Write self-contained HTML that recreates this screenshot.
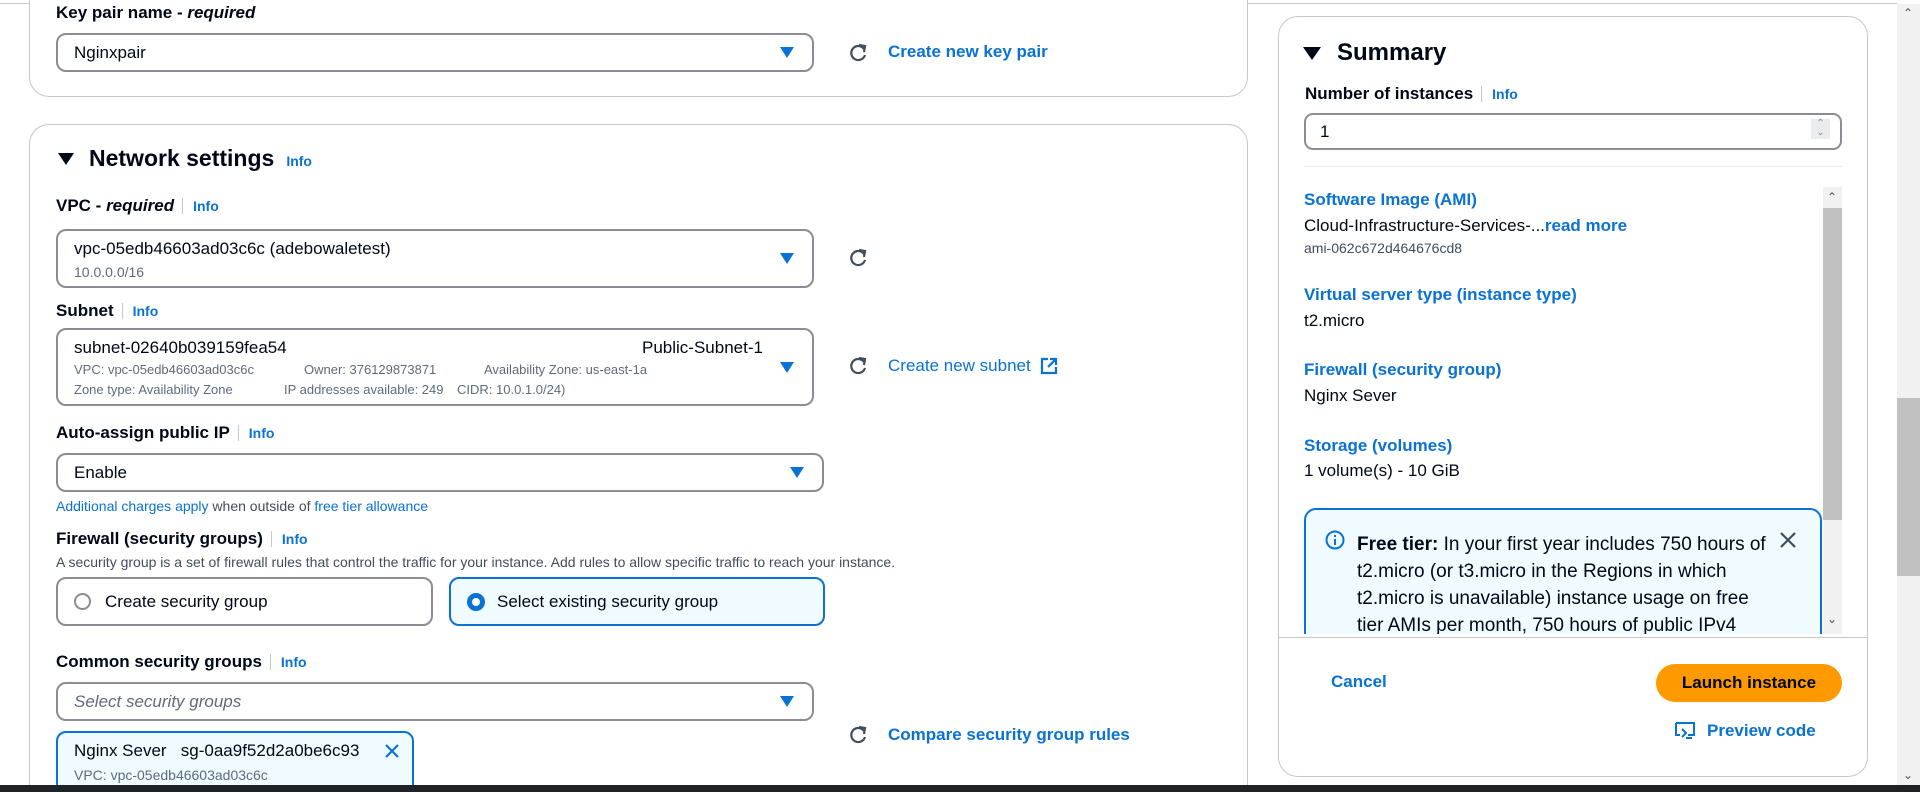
<!DOCTYPE html>
<html style="width:1920px;height:792px;overflow:hidden"><head><meta charset="utf-8"><style>
*{box-sizing:border-box;margin:0;padding:0}
body{width:1920px;height:792px;overflow:hidden;background:#fff;font-family:"Liberation Sans",Arial,sans-serif;color:#000716;position:relative;font-size:17px}
.a{position:absolute;white-space:nowrap}
.card{position:absolute;border:1px solid #c6c6cd;border-radius:20px;background:#fff}
.lbl{font-weight:bold;font-size:17px;line-height:20px}
.info{color:#0972d3;font-weight:bold;font-size:14px;padding-left:10px;margin-left:8px;border-left:1px solid #c6c6cd}
.sel{position:absolute;border:2px solid #8c8c94;border-radius:10px;background:#fff}
.arr{position:absolute;width:0;height:0;border-left:7px solid transparent;border-right:7px solid transparent;border-top:11px solid #0972d3}
.link{color:#0972d3;font-weight:bold}
.gray{color:#5f6b7a}
.bl{color:#0972d3;font-weight:bold}
</style></head><body>
<div class="a" style="left:0;top:3px;width:1897px;height:1px;background:#c6c6cd"></div>

<div class="card" style="left:29px;top:-40px;width:1219px;height:137px"></div>
<div class="a lbl" style="left:56px;top:3px">Key pair name - <i>required</i></div>
<div class="sel" style="left:56px;top:33px;width:758px;height:39px"><span class="a" style="left:16px;top:8px">Nginxpair</span><div class="arr" style="right:18px;top:12px"></div></div>
<svg class="a" style="left:847px;top:42px" width="22" height="22" viewBox="0 0 22 22"><path d="M17 7A7 7 0 1 0 18 13" fill="none" stroke="#414d5c" stroke-width="2.2"/><path d="M12 3l6 1-1 6" fill="none" stroke="#414d5c" stroke-width="2.2"/></svg>
<div class="a link" style="left:888px;top:42px">Create new key pair</div>

<div class="card" style="left:29px;top:124px;width:1219px;height:700px"></div>
<div class="a" style="left:58px;top:153px;width:0;height:0;border-left:8px solid transparent;border-right:8px solid transparent;border-top:12px solid #000716"></div>
<div class="a" style="left:89px;top:145px;font-size:23px;font-weight:bold">Network settings<span class="info" style="border:none;margin:0;padding-left:12px">Info</span></div>
<div class="a lbl" style="left:56px;top:196px">VPC - <i>required</i><span class="info">Info</span></div>
<div class="sel" style="left:56px;top:229px;width:758px;height:59px"><span class="a" style="left:16px;top:8px">vpc-05edb46603ad03c6c (adebowaletest)</span><span class="a gray" style="left:16px;top:33px;font-size:14px">10.0.0.0/16</span><div class="arr" style="right:18px;top:22px"></div></div>
<svg class="a" style="left:847px;top:247px" width="22" height="22" viewBox="0 0 22 22"><path d="M17 7A7 7 0 1 0 18 13" fill="none" stroke="#414d5c" stroke-width="2.2"/><path d="M12 3l6 1-1 6" fill="none" stroke="#414d5c" stroke-width="2.2"/></svg>
<div class="a lbl" style="left:56px;top:301px">Subnet<span class="info">Info</span></div>
<div class="sel" style="left:56px;top:328px;width:758px;height:78px">
<span class="a" style="left:16px;top:8px">subnet-02640b039159fea54</span><span class="a" style="left:584px;top:8px">Public-Subnet-1</span>
<span class="a gray" style="left:16px;top:32px;font-size:13px">VPC: vpc-05edb46603ad03c6c</span><span class="a gray" style="left:246px;top:32px;font-size:13px">Owner: 376129873871</span><span class="a gray" style="left:426px;top:32px;font-size:13px">Availability Zone: us-east-1a</span>
<span class="a gray" style="left:16px;top:52px;font-size:13px">Zone type: Availability Zone</span><span class="a gray" style="left:226px;top:52px;font-size:13px">IP addresses available: 249</span><span class="a gray" style="left:399px;top:52px;font-size:13px">CIDR: 10.0.1.0/24)</span>
<div class="arr" style="right:18px;top:32px"></div></div>
<svg class="a" style="left:847px;top:355px" width="22" height="22" viewBox="0 0 22 22"><path d="M17 7A7 7 0 1 0 18 13" fill="none" stroke="#414d5c" stroke-width="2.2"/><path d="M12 3l6 1-1 6" fill="none" stroke="#414d5c" stroke-width="2.2"/></svg>
<div class="a" style="left:888px;top:356px;color:#0972d3">Create new subnet</div>
<svg class="a" style="left:1040px;top:357px" width="18" height="18" viewBox="0 0 18 18"><path d="M8 2H2v14h14v-6M10 2h6v6M16 2L8 10" fill="none" stroke="#0972d3" stroke-width="2.2"/></svg>

<div class="a lbl" style="left:56px;top:423px">Auto-assign public IP<span class="info">Info</span></div>
<div class="sel" style="left:56px;top:453px;width:768px;height:39px"><span class="a" style="left:16px;top:8px">Enable</span><div class="arr" style="right:18px;top:12px"></div></div>
<div class="a" style="left:56px;top:498px;font-size:14px;color:#414d5c"><span style="color:#0972d3">Additional charges apply</span> when outside of <span style="color:#0972d3">free tier allowance</span></div>
<div class="a lbl" style="left:56px;top:529px">Firewall (security groups)<span class="info">Info</span></div>
<div class="a" style="left:56px;top:554px;font-size:14px;color:#414d5c">A security group is a set of firewall rules that control the traffic for your instance. Add rules to allow specific traffic to reach your instance.</div>
<div class="a" style="left:56px;top:577px;width:377px;height:49px;border:2px solid #8c8c94;border-radius:10px"><div class="a" style="left:16px;top:14px;width:17px;height:17px;border:2px solid #8c8c94;border-radius:50%"></div><span class="a" style="left:47px;top:13px">Create security group</span></div>
<div class="a" style="left:449px;top:577px;width:376px;height:49px;border:2px solid #0972d3;border-radius:10px;background:#f0fbff"><div class="a" style="left:16px;top:14px;width:18px;height:18px;border:5px solid #0972d3;border-radius:50%;background:#fff"></div><span class="a" style="left:46px;top:13px">Select existing security group</span></div>
<div class="a lbl" style="left:56px;top:652px">Common security groups<span class="info">Info</span></div>
<div class="sel" style="left:56px;top:682px;width:758px;height:39px"><span class="a" style="left:16px;top:8px;font-style:italic;color:#5f6b7a">Select security groups</span><div class="arr" style="right:18px;top:12px"></div></div>
<div class="a" style="left:56px;top:731px;width:358px;height:70px;border:2px solid #0972d3;border-radius:10px;background:#f0fbff">
<span class="a" style="left:16px;top:8px">Nginx Sever&nbsp;&nbsp; sg-0aa9f52d2a0be6c93</span>
<svg class="a" style="left:326px;top:10px" width="16" height="16" viewBox="0 0 16 16"><path d="M2 2L14 14M14 2L2 14" stroke="#0972d3" stroke-width="2.2"/></svg>
<span class="a gray" style="left:16px;top:34px;font-size:14px">VPC: vpc-05edb46603ad03c6c</span></div>
<svg class="a" style="left:847px;top:724px" width="22" height="22" viewBox="0 0 22 22"><path d="M17 7A7 7 0 1 0 18 13" fill="none" stroke="#414d5c" stroke-width="2.2"/><path d="M12 3l6 1-1 6" fill="none" stroke="#414d5c" stroke-width="2.2"/></svg>
<div class="a link" style="left:888px;top:725px">Compare security group rules</div>

<div class="card" style="left:1278px;top:16px;width:590px;height:761px"></div>
<div class="a" style="left:1303px;top:47px;width:0;height:0;border-left:9px solid transparent;border-right:9px solid transparent;border-top:13px solid #000716"></div>
<div class="a" style="left:1337px;top:39px;font-size:24px;font-weight:bold">Summary</div>
<div class="a lbl" style="left:1305px;top:84px">Number of instances<span class="info">Info</span></div>
<div class="a" style="left:1304px;top:113px;width:538px;height:37px;border:2px solid #8c8c94;border-radius:9px"><span class="a" style="left:14px;top:7px">1</span><div class="a" style="right:10px;top:4px;width:19px;height:20px;background:#e9ebed;color:#8c8c94;font-size:10px;line-height:9px;text-align:center">⌃<br>⌄</div></div>
<div class="a" style="left:1304px;top:166px;width:538px;height:1px;background:#e9ebed"></div>
<div class="a" style="left:1823px;top:187px;width:19px;height:447px;background:#f1f1f1"></div>
<div class="a" style="left:1823px;top:208px;width:19px;height:312px;background:#c1c1c1"></div>
<div class="a" style="left:1827px;top:190px;font-size:12px;color:#505050">⌃</div>
<div class="a" style="left:1827px;top:612px;font-size:12px;color:#505050">⌄</div>
<div class="a bl" style="left:1304px;top:190px">Software Image (AMI)</div>
<div class="a" style="left:1304px;top:216px">Cloud-Infrastructure-Services-...<span class="bl">read more</span></div>
<div class="a" style="left:1304px;top:240px;font-size:14px;color:#414d5c">ami-062c672d464676cd8</div>
<div class="a bl" style="left:1304px;top:285px">Virtual server type (instance type)</div>
<div class="a" style="left:1304px;top:311px">t2.micro</div>
<div class="a bl" style="left:1304px;top:360px">Firewall (security group)</div>
<div class="a" style="left:1304px;top:386px">Nginx Sever</div>
<div class="a bl" style="left:1304px;top:436px">Storage (volumes)</div>
<div class="a" style="left:1304px;top:461px">1 volume(s) - 10 GiB</div>
<div class="a" style="left:1302px;top:506px;width:522px;height:128px;overflow:hidden">
<div class="a" style="left:2px;top:2px;width:518px;height:170px;border:2px solid #0972d3;border-radius:12px;background:#f0fbff"></div>
<svg class="a" style="left:23px;top:24px" width="20" height="20" viewBox="0 0 20 20"><circle cx="10" cy="10" r="8.5" fill="none" stroke="#0972d3" stroke-width="2"/><path d="M10 9v6M10 5v2" stroke="#0972d3" stroke-width="2"/></svg>
<div class="a" style="left:55px;top:25px;line-height:27px;font-size:19px">
<b>Free tier:</b> In your first year includes 750 hours of<br>t2.micro (or t3.micro in the Regions in which<br>t2.micro is unavailable) instance usage on free<br>tier AMIs per month, 750 hours of public IPv4</div>
<svg class="a" style="left:477px;top:25px" width="18" height="18" viewBox="0 0 18 18"><path d="M2 2L16 16M16 2L2 16" stroke="#414d5c" stroke-width="2.2"/></svg>
</div>
<div class="a" style="left:1279px;top:637px;width:588px;height:1px;background:#c6c6cd"></div>
<div class="a link" style="left:1331px;top:672px">Cancel</div>
<div class="a" style="left:1656px;top:664px;width:186px;height:38px;background:#ff9900;border-radius:19px;font-weight:bold;text-align:center;line-height:38px">Launch instance</div>
<svg class="a" style="left:1674px;top:721px" width="22" height="20" viewBox="0 0 22 20"><path d="M2 2h18v12h-6M2 2v12h4" fill="none" stroke="#0972d3" stroke-width="2"/><path d="M8 8l4 4-4 4M12 17h6" fill="none" stroke="#0972d3" stroke-width="2"/></svg>
<div class="a link" style="left:1707px;top:721px">Preview code</div>

<div class="a" style="left:1897px;top:4px;width:23px;height:781px;background:#f1f1f1"></div>
<div class="a" style="left:1897px;top:398px;width:23px;height:178px;background:#c1c1c1"></div>
<div class="a" style="left:1903px;top:6px;font-size:12px;color:#505050">⌃</div>
<div class="a" style="left:1903px;top:768px;font-size:12px;color:#505050">⌄</div>
<div class="a" style="left:0;top:785px;width:1920px;height:7px;background:#1f2328"></div>
</body></html>
